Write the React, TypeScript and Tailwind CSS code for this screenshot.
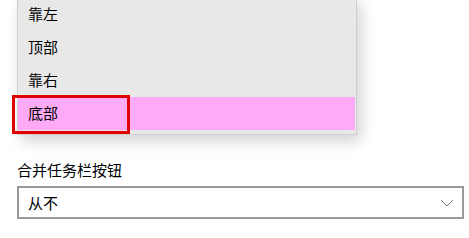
const ITEMS = ['靠左', '顶部', '靠右', '底部'];

export default function App() {
  return (
    <div
      className="relative w-[469px] h-[238px] overflow-hidden bg-white text-black"
      style={{ fontFamily: '"Noto Sans CJK SC", "Noto Sans", sans-serif' }}
    >
      <div className="pl-[17px] pt-[160px] pr-[5px]">
        <div className="text-[15px] leading-[20px] h-[20px]">合并任务栏按钮</div>
        <div className="mt-[6px] flex h-[33px] w-[447px] items-center justify-between border-2 border-[#999999] bg-white pl-[9px] pr-[8px]">
          <span className="text-[15px] leading-[20px]">从不</span>
          <svg width="14" height="8" viewBox="0 0 14 8" className="text-[#7a7a7a]">
            <path d="M1 1 L7 7 L13 1" fill="none" stroke="currentColor" strokeWidth="1" />
          </svg>
        </div>
      </div>

      {/* popup menu */}
      <div className="absolute left-[17px] top-[-3px] w-[340px] border border-[#cfcfcf] bg-[#e8e8e8] pb-[4px] shadow-[4px_6px_14px_rgba(0,0,0,0.18)]">
        {ITEMS.map((item, i) => (
          <div
            key={item}
            className={
              i === 3
                ? 'flex h-[33px] items-center pl-[10px] mr-[1px] bg-[#ffaaf6] text-[15px]'
                : 'flex h-[33px] items-center pl-[10px] text-[15px]'
            }
          >
            {item}
          </div>
        ))}
      </div>

      {/* red highlight */}
      <div className="absolute left-[12px] top-[95px] h-[39px] w-[118px] border-[3px] border-[#e00000]" />
    </div>
  );
}
